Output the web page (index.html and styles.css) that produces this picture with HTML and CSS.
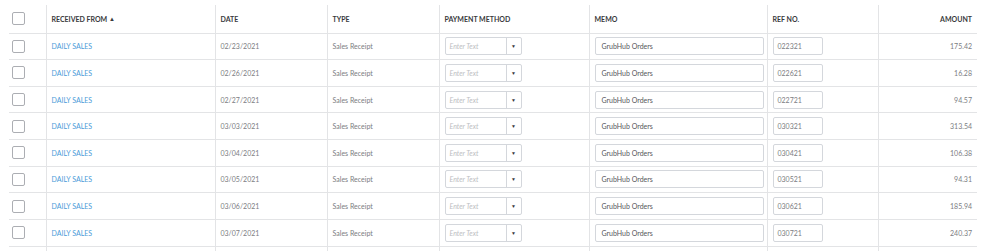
FILE: index.html
```html
<!DOCTYPE html>
<html lang="en">
<head>
  <meta charset="UTF-8" />
  <title>Deposits</title>
  <link rel="stylesheet" href="styles.css">
</head>
<body>
  <table class="txn-table">
    <colgroup>
      <col class="c-check"><col class="c-from"><col class="c-date"><col class="c-type">
      <col class="c-pay"><col class="c-memo"><col class="c-ref"><col class="c-amt">
    </colgroup>
    <thead>
      <tr>
        <th><span class="check"></span></th>
        <th>RECEIVED FROM <span class="sort">&#9650;</span></th>
        <th>DATE</th>
        <th>TYPE</th>
        <th>PAYMENT METHOD</th>
        <th>MEMO</th>
        <th>REF NO.</th>
        <th class="num">AMOUNT</th>
      </tr>
    </thead>
    <tbody id="rows"></tbody>
  </table>

  <script>
    const rows = [
      ["02/23/2021", "022321", "175.42"],
      ["02/26/2021", "022621", "16.28"],
      ["02/27/2021", "022721", "94.57"],
      ["03/03/2021", "030321", "313.54"],
      ["03/04/2021", "030421", "106.38"],
      ["03/05/2021", "030521", "94.31"],
      ["03/06/2021", "030621", "185.94"],
      ["03/07/2021", "030721", "240.37"]
    ];

    const body = document.getElementById("rows");
    rows.forEach(function (r) {
      const tr = document.createElement("tr");
      tr.innerHTML =
        '<td><span class="check"></span></td>' +
        '<td><a class="payee" href="#">DAILY SALES</a></td>' +
        '<td>' + r[0] + '</td>' +
        '<td>Sales Receipt</td>' +
        '<td><div class="combo"><span class="combo-text">Enter Text</span><span class="combo-btn">&#9660;</span></div></td>' +
        '<td><div class="field memo">GrubHub Orders</div></td>' +
        '<td><div class="field ref">' + r[1] + '</div></td>' +
        '<td class="num">' + r[2] + '</td>';
      body.appendChild(tr);
    });

    // next row peeks in below the fold
    const filler = document.createElement("tr");
    filler.className = "filler";
    filler.innerHTML = "<td></td>".repeat(8);
    body.appendChild(filler);
  </script>
</body>
</html>
```

FILE: styles.css
```css
:root {
  --line: #e3e4e6;
  --text: #7c7d82;
  --dark: #393a3d;
  --link: #4a9bd8;
  --input: #d4d7dc;
}

* {
  box-sizing: border-box;
}

body {
  margin: 5px 0 0 9px;
  background: #fff;
  font-family: Lato, "Open Sans", sans-serif;
  font-size: 7px;
  color: var(--text);
  overflow: hidden;
  height: 246px;
}

.txn-table {
  border-collapse: collapse;
  table-layout: fixed;
  width: 968px;
}

.c-check { width: 37px; }
.c-from { width: 169px; }
.c-date { width: 112px; }
.c-type { width: 112px; }
.c-pay { width: 150px; }
.c-memo { width: 178px; }
.c-ref { width: 111px; }
.c-amt { width: 99px; }

th, td {
  text-align: left;
  padding: 0 4px 0 5px;
  border-left: 1px solid var(--line);
  border-bottom: 1px solid var(--line);
  white-space: nowrap;
}

th:first-child, td:first-child {
  border-left: none;
  padding: 0 0 0 3px;
}

th {
  height: 28px;
  font-weight: 700;
  color: var(--dark);
  vertical-align: middle;
}

td {
  height: 26.625px;
  vertical-align: middle;
}

.num {
  text-align: right;
  padding-right: 5px;
}

.sort {
  font-size: 6px;
  position: relative;
  top: -1px;
}

.check {
  display: block;
  width: 13px;
  height: 13px;
  border: 1px solid #acaeb3;
  border-radius: 2px;
  background: #fff;
}

.payee {
  color: var(--link);
  text-decoration: none;
}

.combo {
  display: flex;
  width: 77px;
  height: 18px;
  border: 1px solid var(--input);
  border-radius: 2px;
  background: #fff;
}

.combo-text {
  flex: 1;
  padding-left: 4px;
  line-height: 16px;
  font-style: italic;
  color: #bcbec2;
}

.combo-btn {
  width: 15px;
  border-left: 1px solid var(--input);
  text-align: center;
  line-height: 16px;
  font-size: 5px;
  color: var(--dark);
}

.field {
  height: 18px;
  line-height: 16px;
  border: 1px solid var(--input);
  border-radius: 2px;
  background: #fff;
  color: #55565b;
}

.memo {
  width: 169px;
  padding-left: 6px;
}

.ref {
  width: 50px;
  padding-left: 4px;
  color: var(--text);
}
```
